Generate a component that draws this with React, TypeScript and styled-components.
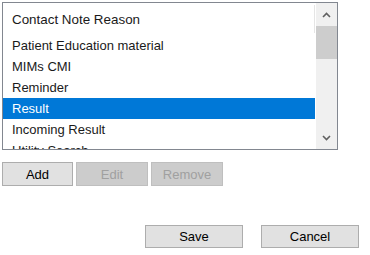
import React from "react";
import styled, { createGlobalStyle } from "styled-components";

const Global = createGlobalStyle`
  html, body { margin: 0; padding: 0; background: #ffffff; }
  body { font-family: "Liberation Sans", Arial, sans-serif; width: 370px; height: 255px; overflow: hidden; }
`;

const Page = styled.div`
  width: 370px;
  height: 255px;
  box-sizing: border-box;
  padding: 2px 0 0 2px;
  display: flex;
  flex-direction: column;
`;

const ListBox = styled.div`
  width: 336px;
  height: 148px;
  box-sizing: border-box;
  border: 1px solid #828790;
  display: flex;
  background: #ffffff;
  overflow: hidden;
`;

const ListArea = styled.div`
  flex: 1;
  display: flex;
  flex-direction: column;
  overflow: hidden;
  padding-right: 1px;
`;

const Header = styled.div`
  height: 28px;
  margin-top: 2px;
  margin-bottom: 2px;
  flex-shrink: 0;
  display: flex;
  align-items: center;
  padding-left: 9px;
  font-size: 13.4px;
  color: #1a1a1a;
  border-right: 1px solid #e5e5e5;
`;

const Row = styled.div<{ $selected?: boolean }>`
  height: 21px;
  flex-shrink: 0;
  display: flex;
  align-items: center;
  padding-left: 9px;
  font-size: 13px;
  color: ${(p) => (p.$selected ? "#ffffff" : "#1a1a1a")};
  background: ${(p) => (p.$selected ? "#0078d7" : "transparent")};
  white-space: nowrap;
`;

const ScrollBar = styled.div`
  width: 21px;
  flex-shrink: 0;
  background: #f0f0f0;
  display: flex;
  flex-direction: column;
`;

const ArrowBtn = styled.div`
  height: 23px;
  display: flex;
  align-items: center;
  justify-content: center;
  flex-shrink: 0;
`;

const Thumb = styled.div`
  height: 33px;
  background: #cdcdcd;
  flex-shrink: 0;
`;

const Track = styled.div`
  flex: 1;
`;

const ButtonRow = styled.div`
  display: flex;
  gap: 3px;
  margin-top: 12px;
`;

const Btn = styled.button<{ $w: number; $h: number }>`
  width: ${(p) => p.$w}px;
  height: ${(p) => p.$h}px;
  box-sizing: border-box;
  border: 1px solid #adadad;
  background: #e1e1e1;
  color: #000000;
  font-family: "Liberation Sans", Arial, sans-serif;
  font-size: 13px;
  padding: 0;
  margin: 0;
  display: flex;
  align-items: center;
  justify-content: center;
  &:disabled {
    background: #cccccc;
    border-color: #bfbfbf;
    color: #a0a0a0;
  }
`;

const FooterRow = styled.div`
  display: flex;
  gap: 18px;
  margin-top: 39px;
  margin-left: 143px;
`;

const Chevron = ({ up }: { up?: boolean }) => (
  <svg width="9" height="6" viewBox="0 0 9 6">
    <path
      d={up ? "M1 5 L4.5 1.5 L8 5" : "M1 1 L4.5 4.5 L8 1"}
      fill="none"
      stroke="#606060"
      strokeWidth="1.6"
    />
  </svg>
);

const items = [
  "Patient Education material",
  "MIMs CMI",
  "Reminder",
  "Result",
  "Incoming Result",
  "Utility Search",
];

export default function App() {
  return (
    <>
      <Global />
      <Page>
        <ListBox>
          <ListArea>
            <Header>Contact Note Reason</Header>
            {items.map((t) => (
              <Row key={t} $selected={t === "Result"}>
                {t}
              </Row>
            ))}
          </ListArea>
          <ScrollBar>
            <ArrowBtn>
              <Chevron up />
            </ArrowBtn>
            <Thumb />
            <Track />
            <ArrowBtn>
              <Chevron />
            </ArrowBtn>
          </ScrollBar>
        </ListBox>
        <ButtonRow>
          <Btn $w={71} $h={24}>Add</Btn>
          <Btn $w={72} $h={24} disabled>
            Edit
          </Btn>
          <Btn $w={72} $h={24} disabled>
            Remove
          </Btn>
        </ButtonRow>
        <FooterRow>
          <Btn $w={98} $h={23}>Save</Btn>
          <Btn $w={98} $h={23}>Cancel</Btn>
        </FooterRow>
      </Page>
    </>
  );
}
